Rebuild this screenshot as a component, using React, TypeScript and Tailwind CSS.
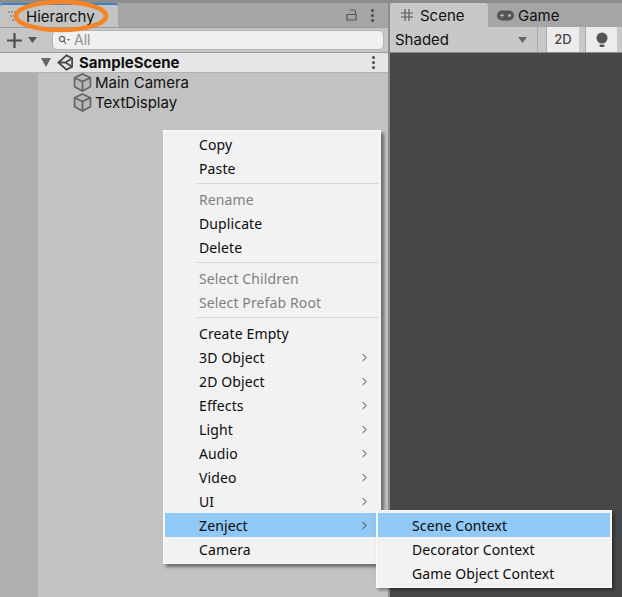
import { ChevronRight } from "lucide-react";

const sans = "font-['Noto_Sans','Open_Sans',sans-serif]";
const panel = "font-['Inter',sans-serif]";

type Entry = { label: string; arrow?: boolean; disabled?: boolean; active?: boolean };

const groups: Entry[][] = [
  [{ label: "Copy" }, { label: "Paste" }],
  [{ label: "Rename", disabled: true }, { label: "Duplicate" }, { label: "Delete" }],
  [{ label: "Select Children", disabled: true }, { label: "Select Prefab Root", disabled: true }],
  [
    { label: "Create Empty" },
    { label: "3D Object", arrow: true },
    { label: "2D Object", arrow: true },
    { label: "Effects", arrow: true },
    { label: "Light", arrow: true },
    { label: "Audio", arrow: true },
    { label: "Video", arrow: true },
    { label: "UI", arrow: true },
    { label: "Zenject", arrow: true, active: true },
    { label: "Camera" },
  ],
];

const MenuRow = ({ item }: { item: Entry }) => (
  <div
    className={`flex h-6 items-center pl-[34px] pr-[8px] text-[14px] tracking-[0.12px] ${
      item.active ? "bg-[#90c8f6]" : ""
    } ${item.disabled ? "text-[#808080]" : "text-[#0c0c0c]"}`}
  >
    <span className="flex-1">{item.label}</span>
    {item.arrow && <ChevronRight size={13} strokeWidth={1.8} className="text-[#333]" />}
  </div>
);

const CubeIcon = () => (
  <svg width="19" height="19" viewBox="0 0 18 18" fill="none" stroke="#646464" strokeWidth="1.6">
    <path d="M9 1 16.5 4.5V13L9 17 1.5 13V4.5Z" fill="#b8b8b8" />
    <path d="M1.5 4.5 9 8 16.5 4.5M9 8V17" />
  </svg>
);

const UnityIcon = () => (
  <svg width="17" height="17" viewBox="0 0 18 18" fill="none" stroke="#484848" strokeWidth="1.9">
    <path d="M10 1.5 16 4.5V13.5L10 16.5 1.5 9Z" />
    <path d="M1.5 9H9L16 4.5M9 9 16 13.5" />
  </svg>
);

const Dots = () => (
  <div className="flex flex-col gap-[2px]">
    <span className="h-[3px] w-[3px] rounded-full bg-[#4a4a4a]" />
    <span className="h-[3px] w-[3px] rounded-full bg-[#4a4a4a]" />
    <span className="h-[3px] w-[3px] rounded-full bg-[#4a4a4a]" />
  </div>
);

export default function App() {
  return (
    <div className={`relative flex h-[597px] w-[622px] overflow-hidden bg-[#8c8c8c] pt-[3px] ${sans}`}>
      {/* hierarchy panel */}
      <div className={`flex h-full w-[388px] flex-col bg-[#c2c2c2] ${panel}`}>
        <div className="flex h-6 shrink-0 items-stretch bg-[#a5a5a5]">
          <div className="flex w-[118px] items-center gap-[5px] rounded-t-[3px] border-t-2 border-[#3f7fc4] bg-[#c4c4c4] pl-[7px]">
            <svg width="14" height="12" viewBox="0 0 14 12" stroke="#666" strokeWidth="1" fill="none" strokeDasharray="2 1">
              <path d="M1 2H12M3 6H12M5 10H12" />
            </svg>
            <span className="text-[15px] leading-none text-[#111]">Hierarchy</span>
          </div>
          <div className="flex flex-1 items-center justify-end gap-[14px] pr-[14px]">
            <svg width="11" height="12" viewBox="0 0 11 12" fill="none" stroke="#555" strokeWidth="1.2">
              <path d="M1 5.5H10V11H1ZM3 5.5H9.5V2.5Q9.5 1 8 1H4" />
            </svg>
            <Dots />
          </div>
        </div>
        <div className="flex h-[26px] shrink-0 items-center gap-[5px] border-y border-[#9a9a9a] bg-[#c6c6c6] pl-[6px] pr-[4px]">
          <svg width="17" height="17" viewBox="0 0 17 17" stroke="#4c4c4c" strokeWidth="2.2">
            <path d="M8.5 1V16M1 8.5H16" />
          </svg>
          <svg width="9" height="6" viewBox="0 0 9 6" fill="#555">
            <path d="M0 0H9L4.5 6Z" />
          </svg>
          <div className="ml-[10px] flex h-[20px] flex-1 items-center gap-[4px] rounded-[5px] border border-[#b4b4b4] bg-[#f0f0f0] pl-[5px]">
            <svg width="12" height="10" viewBox="0 0 12 10" fill="none" stroke="#666" strokeWidth="1.3">
              <circle cx="4" cy="4" r="2.6" />
              <path d="M6 6 8 9" />
              <path d="M9 4H12L10.5 6Z" fill="#666" stroke="none" />
            </svg>
            <span className="text-[14px] leading-none text-[#8f8f8f]">All</span>
          </div>
        </div>
        <div className="flex flex-1">
          <div className="w-[38px] bg-[#b0b0b0]" />
          <div className="flex-1">
            <div className="-ml-[38px] flex h-[20px] items-center border-b border-[#b0b0b0] bg-[#e6e6e6] pl-[41px] pr-[13px]">
              <svg width="10" height="9" viewBox="0 0 10 9" fill="#666">
                <path d="M0 0H10L5 9Z" />
              </svg>
              <span className="ml-[6px]">
                <UnityIcon />
              </span>
              <span className="ml-[5px] flex-1 text-[15px] font-bold leading-none text-[#111]">SampleScene</span>
              <Dots />
            </div>
            <div className="flex h-[20px] items-center gap-[3px] pb-[2px] pl-[35px] text-[15px] leading-none text-[#111]">
              <CubeIcon />
              Main Camera
            </div>
            <div className="flex h-[20px] items-center gap-[3px] pb-[2px] pl-[35px] text-[15px] leading-none text-[#111]">
              <CubeIcon />
              TextDisplay
            </div>
          </div>
        </div>
      </div>

      {/* scene panel */}
      <div className={`ml-[2px] flex h-full flex-1 flex-col ${panel}`}>
        <div className="flex h-6 shrink-0 items-stretch bg-[#a5a5a5]">
          <div className="flex w-[98px] items-center gap-[7px] rounded-t-[3px] bg-[#c8c8c8] pl-[11px] text-[15px] leading-none text-[#111]">
            <svg width="12" height="12" viewBox="0 0 12 12" stroke="#555" strokeWidth="1.1">
              <path d="M4 0V12M8 0V12M0 4H12M0 8H12" />
            </svg>
            Scene
          </div>
          <div className="flex items-center gap-[4px] pl-[9px] text-[15px] leading-none text-[#111]">
            <svg width="17" height="11" viewBox="0 0 17 11">
              <rect width="17" height="10" y="0.5" rx="5" fill="#555" />
              <path d="M3 5.5H7M5 3.5V7.5" stroke="#bbb" strokeWidth="1" />
              <circle cx="12.5" cy="5.5" r="1.4" fill="#bbb" />
            </svg>
            Game
          </div>
        </div>
        <div className="flex h-[26px] shrink-0 items-stretch border-b border-[#8a8a8a] bg-[#c8c8c8]">
          <div className="flex w-[148px] items-center justify-between border-r border-[#aaa] pl-[5px] pr-[10px] text-[15px] leading-none text-[#111]">
            Shaded
            <svg width="9" height="6" viewBox="0 0 9 6" fill="#666">
              <path d="M0 0H9L4.5 6Z" />
            </svg>
          </div>
          <div className="ml-[8px] flex w-[33px] items-center justify-center border-l border-[#aaa] bg-[#ececec] text-[13px] font-medium text-[#444]">
            2D
          </div>
          <div className="ml-[6px] flex w-[32px] items-center justify-center border-l border-[#aaa] bg-[#ececec]">
            <svg width="12" height="16" viewBox="0 0 12 16" fill="#555">
              <circle cx="6" cy="6" r="5.5" />
              <rect x="3.5" y="12.5" width="5" height="2.5" rx="1" />
            </svg>
          </div>
        </div>
        <div className="flex-1 bg-[#474747]" />
      </div>

      {/* context menu */}
      <div className="absolute left-[163px] top-[130px] w-[218px] border border-[#fafafa] bg-[#f2f2f2] px-[1px] pb-[2px] pt-[1px] shadow-[3px_3px_3px_rgba(0,0,0,0.45)]">
        {groups.map((group, i) => (
          <div key={i}>
            {i > 0 && (
              <div className="flex h-[7px] items-center pl-[32px] pr-[1px]">
                <div className="h-px flex-1 bg-[#d4d4d4]" />
              </div>
            )}
            {group.map((item) => (
              <MenuRow key={item.label} item={item} />
            ))}
          </div>
        ))}
      </div>

      {/* zenject submenu */}
      <div className="absolute left-[376px] top-[510px] w-[236px] border border-[#fafafa] bg-[#f2f2f2] px-[1px] py-[2px] shadow-[2px_2px_3px_rgba(0,0,0,0.4)]">
        <MenuRow item={{ label: "Scene Context", active: true }} />
        <MenuRow item={{ label: "Decorator Context" }} />
        <MenuRow item={{ label: "Game Object Context" }} />
      </div>

      {/* hand drawn annotation round the tab */}
      <svg className="absolute left-0 top-0" width="120" height="36" viewBox="0 0 120 36" fill="none">
        <ellipse cx="61" cy="16" rx="45" ry="14" stroke="#f58426" strokeWidth="4.5" />
      </svg>
    </div>
  );
}
